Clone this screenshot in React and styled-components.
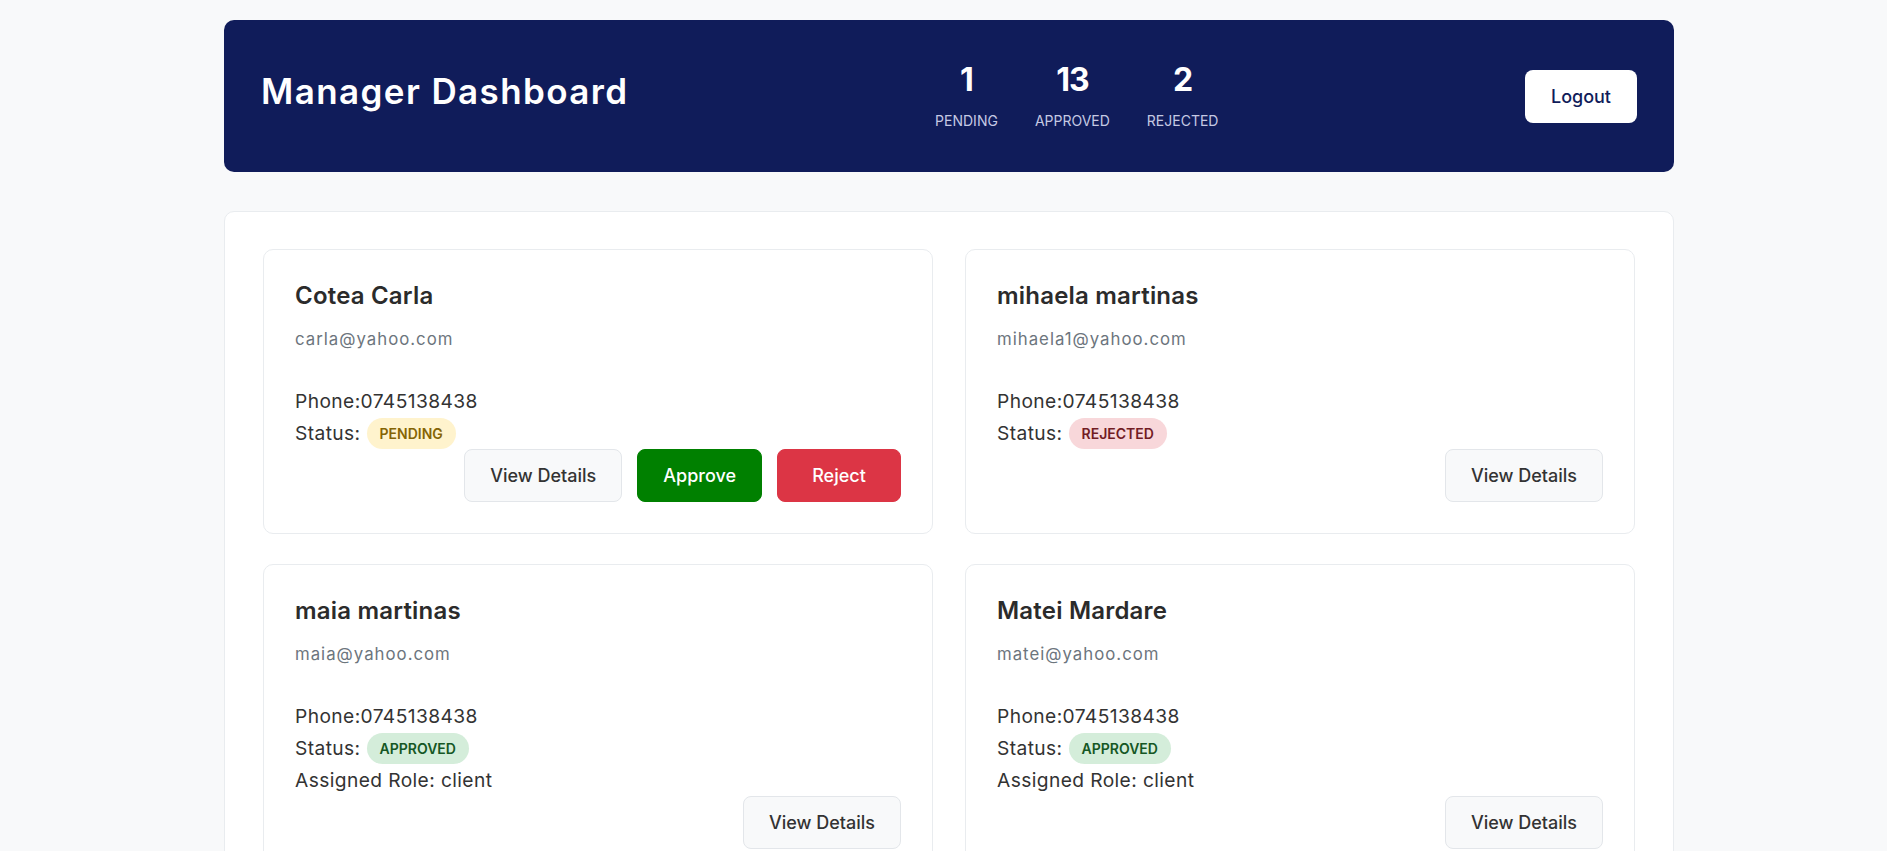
import React from "react";
import styled, { createGlobalStyle } from "styled-components";

const GlobalStyle = createGlobalStyle`
  * {
    box-sizing: border-box;
  }
  html {
    scrollbar-width: none;
  }
  html::-webkit-scrollbar {
    display: none;
  }
  body {
    margin: 0;
    background: #f8f9fa;
    color: #333;
    font-family: Inter, "Noto Sans", sans-serif;
  }
`;

const Page = styled.div`
  padding: 20px 0 0 11px;
`;

const Container = styled.div`
  max-width: 1450px;
  margin: 0 auto;
`;

const Header = styled.header`
  display: flex;
  justify-content: space-between;
  align-items: center;
  height: 152px;
  padding: 0 37px;
  margin-bottom: 39px;
  background: #101c5a;
  border-radius: 10px;
`;

const Title = styled.h1`
  margin: 0 0 10px;
  font-size: 35px;
  font-weight: 600;
  letter-spacing: 1.4px;
  color: #fff;
`;

const Stats = styled.div`
  display: flex;
  gap: 37px;
`;

const Stat = styled.div`
  display: flex;
  flex-direction: column;
  align-items: center;
`;

const StatNumber = styled.span`
  font-size: 32px;
  line-height: 38px;
  font-weight: 700;
  letter-spacing: -1px;
  color: #fff;
`;

const StatLabel = styled.span`
  margin-top: 11px;
  font-size: 14px;
  line-height: 21px;
  color: #c5c9e3;
  text-transform: uppercase;
`;

const LogoutButton = styled.button`
  width: 112px;
  height: 53px;
  border: none;
  border-radius: 8px;
  background: #fff;
  color: #101c5a;
  font-family: inherit;
  font-size: 18px;
  font-weight: 500;
  cursor: pointer;
`;

const Panel = styled.main`
  padding: 37px 38px;
  background: #fff;
  border: 1px solid #e9ecef;
  border-radius: 10px;
`;

const Grid = styled.div`
  display: grid;
  grid-template-columns: 1fr 1fr;
  gap: 30px 32px;
`;

const Card = styled.div`
  display: flex;
  flex-direction: column;
  padding: 31px;
  background: #fff;
  border: 1px solid #e9ecef;
  border-radius: 10px;
`;

const Name = styled.h3`
  margin: 0 0 17px;
  font-size: 24px;
  line-height: 29px;
  font-weight: 600;
  letter-spacing: 0.2px;
  color: #2b2b2b;
`;

const Email = styled.p`
  margin: 0 0 33px;
  font-size: 16.8px;
  line-height: 25px;
  letter-spacing: 1px;
  color: #6c757d;
`;

const Info = styled.div`
  display: flex;
  align-items: center;
  font-size: 19.2px;
  line-height: 32px;
  letter-spacing: 0.4px;
  color: #333;
`;

const badgeColors = {
  pending: { bg: "#fff3cd", fg: "#856404" },
  approved: { bg: "#d4edda", fg: "#155724" },
  rejected: { bg: "#f8d7da", fg: "#721c24" },
};

const Badge = styled.span`
  margin-left: 6px;
  padding: 5px 13px;
  border-radius: 999px;
  background: ${(p) => badgeColors[p.$status].bg};
  color: ${(p) => badgeColors[p.$status].fg};
  font-size: 14px;
  line-height: 21px;
  font-weight: 600;
  letter-spacing: 0;
  text-transform: uppercase;
`;

const Actions = styled.div`
  display: flex;
  justify-content: flex-end;
  gap: 15px;
  margin-top: auto;
`;

const buttonStyles = {
  default: { bg: "#f8f9fa", fg: "#333", border: "#e3e6ea" },
  approve: { bg: "#008000", fg: "#fff", border: "#008000" },
  reject: { bg: "#dc3545", fg: "#fff", border: "#dc3545" },
};

const Button = styled.button`
  min-width: 124px;
  height: 53px;
  padding: 0 25px;
  border: 1px solid ${(p) => buttonStyles[p.$variant].border};
  border-radius: 8px;
  background: ${(p) => buttonStyles[p.$variant].bg};
  color: ${(p) => buttonStyles[p.$variant].fg};
  font-family: inherit;
  font-size: 18px;
  font-weight: 500;
  cursor: pointer;
`;

const stats = [
  { value: 1, label: "Pending" },
  { value: 13, label: "Approved" },
  { value: 2, label: "Rejected" },
];

const requests = [
  { name: "Cotea Carla", email: "carla@yahoo.com", phone: "0745138438", status: "pending" },
  { name: "mihaela martinas", email: "mihaela1@yahoo.com", phone: "0745138438", status: "rejected" },
  { name: "maia martinas", email: "maia@yahoo.com", phone: "0745138438", status: "approved", role: "client" },
  { name: "Matei Mardare", email: "matei@yahoo.com", phone: "0745138438", status: "approved", role: "client" },
];

const RequestCard = ({ request }) => (
  <Card>
    <Name>{request.name}</Name>
    <Email>{request.email}</Email>
    <Info>Phone:{request.phone}</Info>
    <Info>
      Status: <Badge $status={request.status}>{request.status}</Badge>
    </Info>
    {request.role && <Info>Assigned Role: {request.role}</Info>}
    <Actions>
      <Button $variant="default">View Details</Button>
      {request.status === "pending" && (
        <>
          <Button $variant="approve">Approve</Button>
          <Button $variant="reject">Reject</Button>
        </>
      )}
    </Actions>
  </Card>
);

export default function App() {
  return (
    <>
      <GlobalStyle />
      <Page>
        <Container>
          <Header>
            <Title>Manager Dashboard</Title>
            <Stats>
              {stats.map((s) => (
                <Stat key={s.label}>
                  <StatNumber>{s.value}</StatNumber>
                  <StatLabel>{s.label}</StatLabel>
                </Stat>
              ))}
            </Stats>
            <LogoutButton>Logout</LogoutButton>
          </Header>
          <Panel>
            <Grid>
              {requests.map((r) => (
                <RequestCard key={r.email} request={r} />
              ))}
            </Grid>
          </Panel>
        </Container>
      </Page>
    </>
  );
}
